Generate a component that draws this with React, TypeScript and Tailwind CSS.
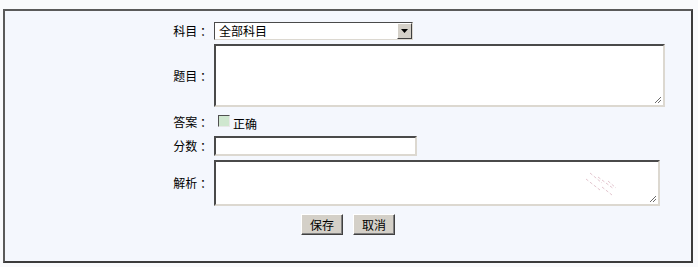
const FONT = "font-['SimSun','Noto_Sans_CJK_SC',sans-serif]";

function Label({ text }: { text: string }) {
  return (
    <div className="flex w-[42px] items-center justify-end pr-[2px] text-[12px] leading-none text-black">
      {text}
    </div>
  );
}

function Grip() {
  return (
    <svg className="absolute right-[1px] bottom-[1px]" width="9" height="9" viewBox="0 0 9 9">
      <path d="M8 2 L2 8 M8 5 L5 8" stroke="#6b6b6b" strokeWidth="1" />
    </svg>
  );
}

function Box({ className, children }: { className: string; children?: React.ReactNode }) {
  return (
    <div
      className={
        "relative border-2 border-t-[#4a4a4a] border-l-[#4a4a4a] border-b-[#dcd8d0] border-r-[#dcd8d0] bg-white " +
        className
      }
    >
      {children}
    </div>
  );
}

function Button({ text }: { text: string }) {
  return (
    <div className="flex h-[21px] w-[42px] items-center justify-center border border-t-white border-l-white border-r-[#404040] border-b-[#404040] bg-[#d4d0c8] text-[12px] leading-none text-black shadow-[inset_-1px_-1px_0_#808080]">
      {text}
    </div>
  );
}

export default function App() {
  return (
    <div className={"h-[267px] w-[698px] bg-[#f9fafc] pt-[9px] pl-[3px] " + FONT}>
      <div className="h-[254px] w-[690px] border-2 border-t-[#5a5a5a] border-l-[#5a5a5a] border-r-[#3c3c3c] border-b-[#3c3c3c] bg-[#f4f7fd]">
        <div className="flex flex-col pl-[167px] pt-[11px]">
          {/* 科目 */}
          <div className="flex h-[18px]">
            <Label text="科目 ：" />
            <div className="flex h-[18px] w-[199px] border border-t-[#4a4a4a] border-l-[#4a4a4a] border-b-[#dcd8d0] border-r-[#dcd8d0] bg-white">
              <div className="flex flex-1 items-center pl-[4px] text-[12px] leading-none text-black">全部科目</div>
              <div className="flex h-[16px] w-[15px] items-center justify-center border border-t-white border-l-white border-r-[#404040] border-b-[#404040] bg-[#d4d0c8]">
                <svg width="7" height="4" viewBox="0 0 7 4">
                  <path d="M0 0 H7 L3.5 4 Z" fill="#000" />
                </svg>
              </div>
            </div>
          </div>

          {/* 题目 */}
          <div className="mt-[4px] flex h-[63px]">
            <Label text="题目 ：" />
            <Box className="h-[63px] w-[451px]">
              <Grip />
            </Box>
          </div>

          {/* 答案 */}
          <div className="flex h-[29px] items-center">
            <Label text="答案 ：" />
            <div className="ml-[4px] flex items-end">
              <div className="mb-[3px] h-[12px] w-[12px] border border-t-[#505050] border-l-[#505050] border-b-[#e8e8e8] border-r-[#e8e8e8] bg-[#cfe7cf]" />
              <span className="ml-[3px] pt-[4px] text-[12px] leading-none text-black">正确</span>
            </div>
          </div>

          {/* 分数 */}
          <div className="flex h-[20px]">
            <Label text="分数 ：" />
            <Box className="h-[20px] w-[203px]" />
          </div>

          {/* 解析 */}
          <div className="mt-[4px] flex h-[46px]">
            <Label text="解析 ：" />
            <Box className="h-[46px] w-[446px]">
              <svg className="absolute left-[370px] top-[9px]" width="32" height="26" viewBox="0 0 32 26">
                <g stroke="#e3c6cf" strokeWidth="1" strokeDasharray="3 2">
                  <path d="M4 2 L16 12" />
                  <path d="M0 8 L14 19" />
                  <path d="M12 6 L28 18" />
                  <path d="M16 16 L26 24" />
                  <path d="M22 10 L30 17" />
                </g>
              </svg>
              <Grip />
            </Box>
          </div>
        </div>

        {/* buttons */}
        <div className="mt-[8px] flex justify-center gap-[10px]">
          <Button text="保存" />
          <Button text="取消" />
        </div>
      </div>
    </div>
  );
}
